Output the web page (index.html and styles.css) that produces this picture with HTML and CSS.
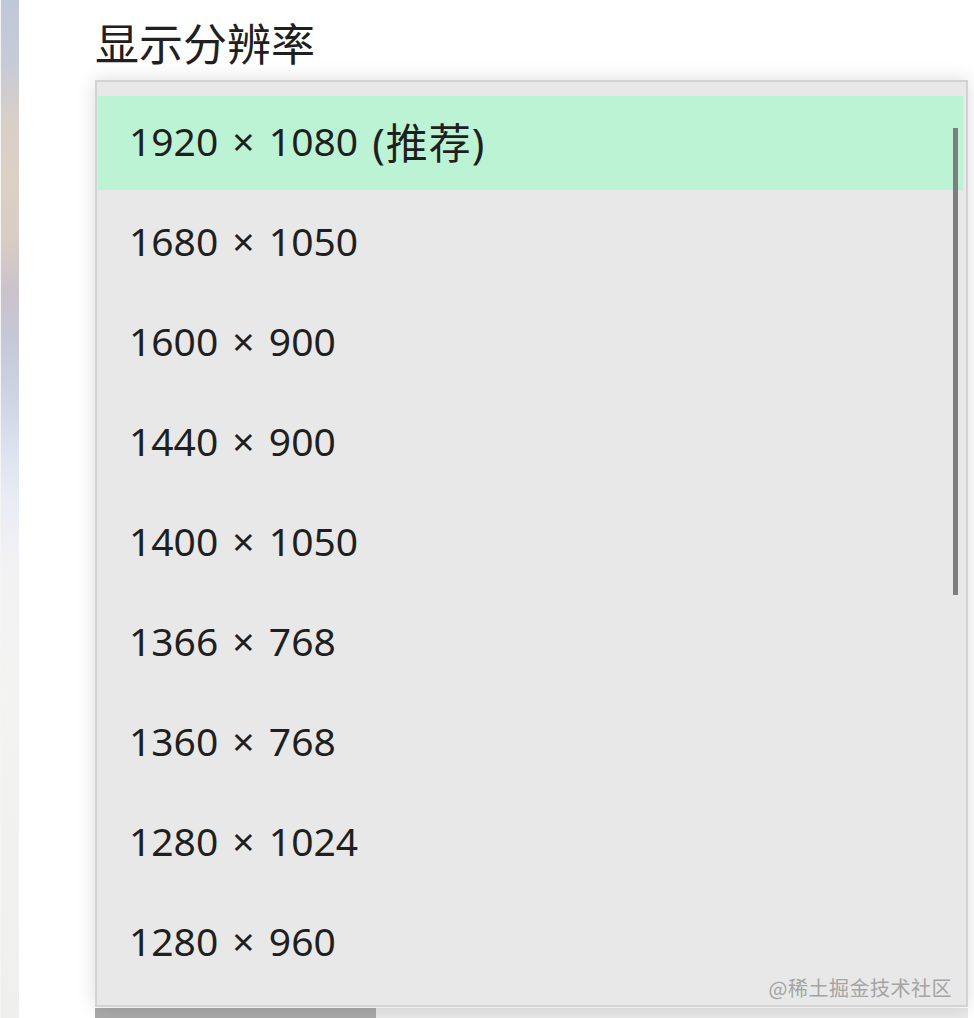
FILE: index.html
```html
<!DOCTYPE html>
<html lang="zh-CN">
<head>
<meta charset="utf-8">
<title>显示分辨率</title>
<link rel="stylesheet" href="styles.css">
</head>
<body>
<div class="page">
  <div class="strip"></div>
  <main class="main">
    <h1 class="title">显示分辨率</h1>
    <div class="dropdown">
      <ul class="list">
        <li class="item selected">1920 × 1080 <span class="note">(推荐)</span></li>
        <li class="item">1680 × 1050</li>
        <li class="item">1600 × 900</li>
        <li class="item">1440 × 900</li>
        <li class="item">1400 × 1050</li>
        <li class="item">1366 × 768</li>
        <li class="item">1360 × 768</li>
        <li class="item">1280 × 1024</li>
        <li class="item">1280 × 960</li>
      </ul>
      <div class="scrollbar"></div>
      <div class="watermark">@稀土掘金技术社区</div>
    </div>
    <div class="under">
      <div class="under-fill"></div>
    </div>
  </main>
</div>
</body>
</html>
```
FILE: styles.css
```css
* { box-sizing: border-box; }
html, body { margin: 0; padding: 0; background: #ffffff; }
body {
  width: 974px;
  height: 1018px;
  overflow: hidden;
  font-family: "Noto Sans", "Noto Sans CJK SC", sans-serif;
  color: #1e1e1e;
}
.page {
  display: flex;
  height: 1018px;
}
.strip {
  width: 19px;
  flex: none;
  border-left: 1px solid #f4f4f4;
  background: linear-gradient(to bottom,
    #bfc8da 0px, #c6cad8 60px, #d8cfc8 120px, #ddd0c4 180px,
    #d8cdc4 240px, #cbc3cb 290px, #c5c8d8 340px, #cdd2e4 390px,
    #dde2f0 450px, #e9ecf4 500px, #f2f2f4 560px, #f3f3f1 700px, #efefee 1018px);
}
.main {
  flex: 1;
  padding-left: 76px;
  display: flex;
  flex-direction: column;
}
.title {
  margin: 13px 0 0 0;
  height: 67px;
  font-family: "Noto Sans CJK SC", sans-serif;
  font-weight: 400;
  font-size: 44px;
  line-height: 58px;
  letter-spacing: 0;
  color: #202020;
}
.dropdown {
  position: relative;
  width: 873px;
  height: 927px;
  background: #e8e8e8;
  border: 2px solid #d3d3d3;
  box-shadow: 0 0 18px rgba(0, 0, 0, 0.14);
}
.list {
  list-style: none;
  margin: 0;
  padding: 14px 3px 0 1px;
}
.item {
  height: 94px;
  margin-bottom: 6px;
  padding: 0 0 6px 31px;
  display: flex;
  align-items: center;
  font-size: 39px;
  word-spacing: 4px;
  color: #1f1f1f;
  white-space: pre;
}
.note {
  font-size: 42px;
  letter-spacing: 1px;
}
.item.selected {
  background: #bcf3d4;
}
.scrollbar {
  position: absolute;
  top: 46px;
  right: 8px;
  width: 5px;
  height: 467px;
  background: #7e7e7e;
}
.watermark {
  position: absolute;
  right: 14px;
  bottom: 3px;
  font-family: "Noto Sans CJK SC", sans-serif;
  font-size: 20px;
  color: #a4a4a4;
  letter-spacing: 0.5px;
}
.under {
  flex: 1;
  margin-top: 1px;
  width: 873px;
  background: #e9e9e9;
}
.under-fill {
  width: 281px;
  height: 100%;
  background: #a9a9a9;
}
```
